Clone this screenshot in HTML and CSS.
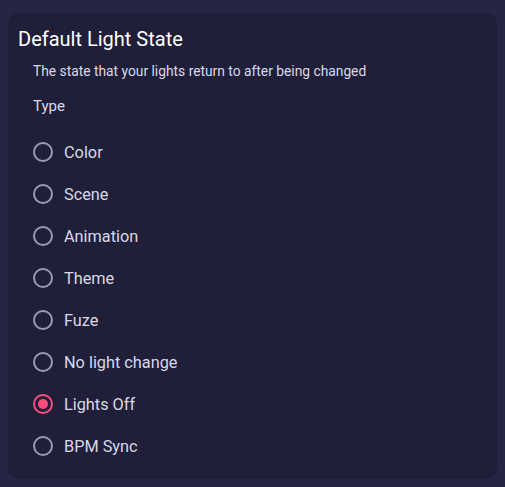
FILE: index.html
```html
<!doctype html>
<html>
    <head>
        <meta charset="UTF-8">
        <meta name="viewport" content="width=device-width, initial-scale=1">
        <title>Default Light State</title>
        <link rel="stylesheet" href="styles.css">
    </head>
    <body>
        <section class="card">
            <h1>Default Light State</h1>
            <p class="hint">The state that your lights return to after being changed</p>
            <div class="options" role="radiogroup" aria-labelledby="type-label">
                <div class="group-label" id="type-label">Type</div>
                <label class="option"><input type="radio" name="type"><span class="dot"></span>Color</label>
                <label class="option"><input type="radio" name="type"><span class="dot"></span>Scene</label>
                <label class="option"><input type="radio" name="type"><span class="dot"></span>Animation</label>
                <label class="option"><input type="radio" name="type"><span class="dot"></span>Theme</label>
                <label class="option"><input type="radio" name="type"><span class="dot"></span>Fuze</label>
                <label class="option"><input type="radio" name="type"><span class="dot"></span>No light change</label>
                <label class="option"><input type="radio" name="type" checked><span class="dot"></span>Lights Off</label>
                <label class="option"><input type="radio" name="type"><span class="dot"></span>BPM Sync</label>
            </div>
        </section>
    </body>
</html>
```

FILE: styles.css
```css
:root {
    --page: #262544;
    --card: #1f1f3a;
    --text: #d9d9e6;
    --ring: #9d9cae;
    --accent: #ff4a7d;
}

html, body {
    margin: 0;
    background-color: var(--page);
}

* {
    font-family: Roboto, "Noto Sans", sans-serif;
    box-sizing: border-box;
}

body {
    padding: 13px 8px 10px;
}

.card {
    background-color: var(--card);
    border-radius: 10px;
    padding: 14px 10px 12px;
}

h1 {
    margin: 0;
    font-size: 20px;
    font-weight: 400;
    line-height: 24px;
    color: #ffffff;
}

.hint {
    margin: 10px 0 0 15px;
    font-size: 13.8px;
    line-height: 20px;
    color: var(--text);
}

.options {
    padding-left: 15px;
}

.group-label {
    margin: 15px 0 15px;
    font-size: 15px;
    line-height: 20px;
    color: var(--text);
}

.option {
    display: flex;
    align-items: center;
    gap: 11px;
    height: 42px;
    font-size: 16.3px;
    color: var(--text);
}

.option input {
    display: none;
}

.dot {
    width: 20px;
    height: 20px;
    border: 2px solid var(--ring);
    border-radius: 50%;
    display: flex;
    align-items: center;
    justify-content: center;
}

.option input:checked + .dot {
    border-color: var(--accent);
}

.option input:checked + .dot::after {
    content: "";
    width: 10px;
    height: 10px;
    border-radius: 50%;
    background-color: var(--accent);
}
```
